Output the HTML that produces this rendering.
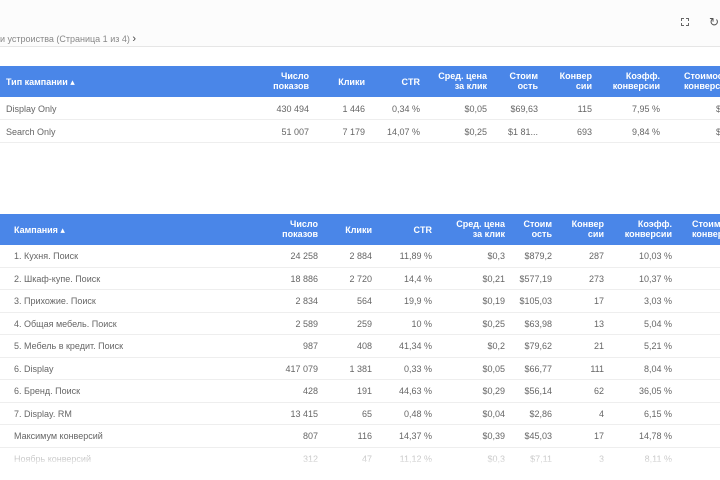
<!DOCTYPE html>
<html><head><meta charset="utf-8"><style>
*{margin:0;padding:0;box-sizing:border-box}
body{width:720px;height:480px;overflow:hidden;background:#fff;font-family:"Liberation Sans","DejaVu Sans",sans-serif;position:relative;color:#666}
.a{position:absolute;white-space:nowrap;font-size:9px}
.h{position:absolute;left:0;width:720px;background:#4a86e8;color:#fff}
.h .a{color:#fff;font-weight:bold;line-height:10px;text-align:right}
.r{position:absolute;left:0;width:720px;border-bottom:1px solid #eee}
</style></head><body>
<div style="position:absolute;left:0;top:0;width:720px;height:47px;background:#fcfcfc;border-bottom:1px solid #e6e6e6"></div>
<div class="a" style="left:0;top:33px;font-size:9px;color:#888">и устроиства (Страница 1 из 4) <span style="color:#444;font-size:11px">›</span></div>
<div style="position:absolute;left:681px;top:18px;width:8px;height:8px;border:1px dashed #666"></div>
<div class="a" style="left:709px;top:15px;font-size:12px;color:#555">↻</div>

<div class="h" style="top:66px;height:31px">
<div class="a" style="left:6px;top:11px;text-align:left">Тип кампании ▴</div>
<div class="a" style="right:411px;top:5px">Число<br>показов</div>
<div class="a" style="right:355px;top:11px">Клики</div>
<div class="a" style="right:300px;top:11px">CTR</div>
<div class="a" style="right:233px;top:5px">Сред. цена<br>за клик</div>
<div class="a" style="right:182px;top:5px">Стоим<br>ость</div>
<div class="a" style="right:128px;top:5px">Конвер<br>сии</div>
<div class="a" style="right:60px;top:5px">Коэфф.<br>конверсии</div>
<div class="a" style="left:684px;top:5px;text-align:left">Стоимость<br>конверсии</div>
</div>
<div class="r" style="top:97px;height:23px"></div>
<div class="r" style="top:120px;height:23px"></div>

<div class="h" style="top:214px;height:31px">
<div class="a" style="left:14px;top:11px;text-align:left">Кампания ▴</div>
<div class="a" style="right:402px;top:5px">Число<br>показов</div>
<div class="a" style="right:348px;top:11px">Клики</div>
<div class="a" style="right:288px;top:11px">CTR</div>
<div class="a" style="right:215px;top:5px">Сред. цена<br>за клик</div>
<div class="a" style="right:168px;top:5px">Стоим<br>ость</div>
<div class="a" style="right:116px;top:5px">Конвер<br>сии</div>
<div class="a" style="right:48px;top:5px">Коэфф.<br>конверсии</div>
<div class="a" style="left:692px;top:5px;text-align:left">Стоимость<br>конверсии</div>
</div>

<div style="position:absolute;top:97px;left:0;width:720px">
<div class="a" style="left:6px;top:7px">Display Only</div><div class="a" style="right:411px;top:7px">430 494</div><div class="a" style="right:355px;top:7px">1 446</div><div class="a" style="right:300px;top:7px">0,34 %</div><div class="a" style="right:233px;top:7px">$0,05</div><div class="a" style="right:182px;top:7px">$69,63</div><div class="a" style="right:128px;top:7px">115</div><div class="a" style="right:60px;top:7px">7,95 %</div><div class="a" style="left:716px;top:7px">$</div>
<div class="a" style="left:6px;top:30px">Search Only</div><div class="a" style="right:411px;top:30px">51 007</div><div class="a" style="right:355px;top:30px">7 179</div><div class="a" style="right:300px;top:30px">14,07 %</div><div class="a" style="right:233px;top:30px">$0,25</div><div class="a" style="right:182px;top:30px">$1 81...</div><div class="a" style="right:128px;top:30px">693</div><div class="a" style="right:60px;top:30px">9,84 %</div><div class="a" style="left:716px;top:30px">$</div>
</div>

<div style="position:absolute;top:245px;left:0;width:720px">
<div class="r" style="top:0;height:22.5px"></div><div class="r" style="top:22.5px;height:22.5px"></div><div class="r" style="top:45px;height:22.5px"></div><div class="r" style="top:67.5px;height:22.5px"></div><div class="r" style="top:90px;height:22.5px"></div><div class="r" style="top:112.5px;height:22.5px"></div><div class="r" style="top:135px;height:22.5px"></div><div class="r" style="top:157.5px;height:22.5px"></div><div class="r" style="top:180px;height:22.5px"></div>
</div>
<div id="t2" style="position:absolute;top:245px;left:0;width:720px"></div>
<script>
var d=[["1. Кухня. Поиск","24 258","2 884","11,89 %","$0,3","$879,2","287","10,03 %"],
["2. Шкаф-купе. Поиск","18 886","2 720","14,4 %","$0,21","$577,19","273","10,37 %"],
["3. Прихожие. Поиск","2 834","564","19,9 %","$0,19","$105,03","17","3,03 %"],
["4. Общая мебель. Поиск","2 589","259","10 %","$0,25","$63,98","13","5,04 %"],
["5. Мебель в кредит. Поиск","987","408","41,34 %","$0,2","$79,62","21","5,21 %"],
["6. Display","417 079","1 381","0,33 %","$0,05","$66,77","111","8,04 %"],
["6. Бренд. Поиск","428","191","44,63 %","$0,29","$56,14","62","36,05 %"],
["7. Display. RM","13 415","65","0,48 %","$0,04","$2,86","4","6,15 %"],
["Максимум конверсий","807","116","14,37 %","$0,39","$45,03","17","14,78 %"],
["Ноябрь конверсий","312","47","11,12 %","$0,3","$7,11","3","8,11 %"]];
var rs=[402,348,288,215,168,116,48],h="";
d.forEach(function(r,i){var t=6+i*22.5;var op=i==9?'opacity:.35;':'';
h+='<div class="a" style="'+op+'left:14px;top:'+t+'px">'+r[0]+'</div>';
for(var j=1;j<8;j++)h+='<div class="a" style="'+op+'right:'+rs[j-1]+'px;top:'+t+'px">'+r[j]+'</div>';});
document.getElementById('t2').innerHTML=h;
</script>
<div style="position:absolute;left:0;top:460px;width:720px;height:20px;background:linear-gradient(rgba(255,255,255,.3),#fff)"></div>
</body></html>
